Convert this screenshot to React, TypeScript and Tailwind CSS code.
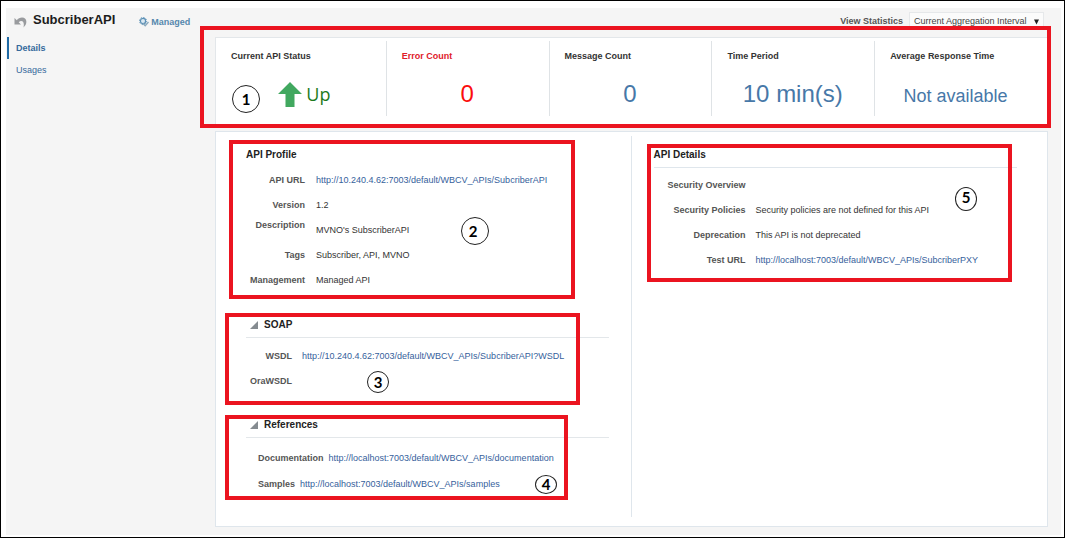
import { useState, type ReactNode } from "react";

const link = "text-[#36619c] hover:underline";

function Outline({ className }: { className: string }) {
  return <div aria-hidden="true" className={`pointer-events-none absolute z-10 border-4 border-[#eb1420] ${className}`} />;
}

function Marker({ n, className }: { n: number; className: string }) {
  return (
    <span
      className={`absolute z-10 flex justify-center rounded-[50%] border border-[#222] font-[Lato,sans-serif] text-[15px] font-bold text-black ${className}`}
    >
      {n}
    </span>
  );
}

function Stat({ title, children, first, danger }: { title: string; children: ReactNode; first?: boolean; danger?: boolean }) {
  return (
    <section className={`relative flex flex-col ${first ? "pl-2" : "border-l border-[#dfe3e6] pl-[15px]"}`}>
      <h2 className={`mt-[7px] h-4 text-[9px] leading-4 font-bold whitespace-nowrap ${danger ? "text-[#e0202a]" : "text-[#333]"}`}>{title}</h2>
      <div className={`mt-[14px] flex h-8 items-center justify-center ${first ? "pr-2" : "pr-4"}`}>{children}</div>
    </section>
  );
}

function Row({ label, children, width, high, tall }: { label: string; children?: ReactNode; width: string; high?: boolean; tall?: boolean }) {
  return (
    <div className={`flex items-center ${tall ? "h-[26px]" : "h-[25px]"}`}>
      <dt className={`shrink-0 text-right font-bold text-[#555] ${width} ${high ? "pb-[10px]" : ""}`}>{label}</dt>
      <dd className="whitespace-nowrap text-[#333]">{children}</dd>
    </div>
  );
}

function Group({ title, children }: { title: string; children: ReactNode }) {
  const [open, setOpen] = useState(true);
  return (
    <section className="relative mt-5">
      <h2 className="border-b border-[#e3e7ea]">
        <button
          type="button"
          aria-expanded={open}
          onClick={() => setOpen(!open)}
          className="flex h-6 items-center gap-[6px] pl-1 text-[10px] font-bold text-[#222]"
        >
          <svg viewBox="0 0 8 8" className={`h-2 w-2 ${open ? "" : "-rotate-45"}`} aria-hidden="true">
            <path d="M8 0V8H0Z" fill="#858b90" />
          </svg>
          {title}
        </button>
      </h2>
      {open && children}
    </section>
  );
}

export default function App() {
  return (
    <div className="flex min-h-screen flex-col border border-black bg-white pt-[7px] pr-[3px] pb-[2px] pl-[5px] font-['Liberation_Sans',Arial,sans-serif] text-[9px] leading-3">
      <div className="flex flex-1 flex-col bg-[#f5f5f5]">
        <header className="flex h-[29px] items-start pr-[17px] pl-2">
          <button type="button" aria-label="Back" className="mt-2 mr-[6px]">
            <svg viewBox="0 0 13 12" className="h-3 w-[13px]" aria-hidden="true">
              <path d="M.5 2V8.500H7L4.700 6.200C7 4 11 4.500 9.500 11.500C14 7.500 13 1.500 8 1.500C6 1.500 4 2.500 2.800 4.200Z" fill="#999b9e" />
            </svg>
          </button>
          <h1 className="text-[13px] leading-6 font-bold text-[#1c1c1c]">SubcriberAPI</h1>
          <p className="mt-[7px] ml-6 flex h-[14px] items-center gap-[2px] font-bold text-[#5688ad]">
            <svg viewBox="0 0 10 10" className="h-[10px] w-[10px]" aria-hidden="true">
              <circle cx="4" cy="4" r="2.6" fill="#dbe9f2" stroke="#5b90b6" strokeWidth="1.2" />
              <circle cx="4" cy="4" r="3.6" fill="none" stroke="#5b90b6" strokeDasharray="1.3 1.5" />
              <path d="M4 6.500L6.200 8.700L9.500 5" fill="none" stroke="#8aa9bd" strokeWidth="1.4" />
            </svg>
            Managed
          </p>
          <div className="mt-1 ml-auto flex h-[18px] items-center">
            <label htmlFor="interval" className="mr-[6px] font-bold text-[#555]">
              View Statistics
            </label>
            <div className="relative">
              <select
                id="interval"
                className="h-[18px] w-[135px] appearance-none border border-[#e6e8ea] bg-[#fbfbfb] pl-1 text-[9px] text-[#444]"
              >
                <option>Current Aggregation Interval</option>
              </select>
              <svg viewBox="0 0 6 6" className="pointer-events-none absolute top-[7px] right-[5px] h-[6px] w-[5px]" aria-hidden="true">
                <path d="M0 0H6L3 6Z" fill="#222" />
              </svg>
            </div>
          </div>
        </header>

        <div className="flex flex-1">
          <nav className="w-[209px] shrink-0 text-[#36699c]">
            <a href="#details" aria-current="page" className="ml-px flex h-[22px] items-center border-l-2 border-[#1f6aa5] pl-[7px] font-bold">
              Details
            </a>
            <a href="#usages" className="flex h-[22px] items-center pl-[10px]">
              Usages
            </a>
          </nav>

          <main className="flex min-w-0 flex-1 flex-col gap-[6px] pr-[13px] pb-2">
            <div className="relative grid h-[88px] grid-cols-5 border border-[#e3e7ea] bg-white pt-[3px] pr-[10px] pb-2 pl-[7px]">
              <Outline className="-top-3 -right-1 -bottom-1 -left-4" />
              <Stat title="Current API Status" first>
                <Marker n={1} className="top-11 left-[9px] h-7 w-7 leading-[27px]" />
                <div className="flex items-center gap-1 font-['Open_Sans',sans-serif] text-[18px] text-[#1c7a1c]">
                  <svg viewBox="0 0 24 25" className="h-[25px] w-6" aria-hidden="true">
                    <path d="M12 0L24 12H16.500V25H7.500V12H0Z" fill="#41a85f" />
                  </svg>
                  Up
                </div>
              </Stat>
              <Stat title="Error Count" danger>
                <span className="text-[24px] text-[#fb0d0d]">0</span>
              </Stat>
              <Stat title="Message Count">
                <span className="text-[24px] text-[#4778a8]">0</span>
              </Stat>
              <Stat title="Time Period">
                <span className="text-[24px] whitespace-nowrap text-[#4778a8]">10 min(s)</span>
              </Stat>
              <Stat title="Average Response Time">
                <span className="pt-1 text-[18px] whitespace-nowrap text-[#4778a8]">Not available</span>
              </Stat>
            </div>

            <div className="grid flex-1 grid-cols-2 border border-[#dfe6ec] bg-white pt-1 pb-[9px]">
              <div className="border-r border-[#dfe6ec] pt-[7px] pr-[22px] pb-5 pl-[30px]">
                <section className="relative pb-px">
                  <Outline className="-top-[3px] -left-[17px] h-[159px] w-[346px]" />
                  <h2 className="h-6 text-[10px] leading-6 font-bold text-[#222]">API Profile</h2>
                  <dl>
                    <Row label="API URL" width="w-[70px] pr-[11px]">
                      <a href="#api-url" className={link}>http://10.240.4.62:7003/default/WBCV_APIs/SubcriberAPI</a>
                    </Row>
                    <Row label="Version" width="w-[70px] pr-[11px]">1.2</Row>
                    <Row label="Description" width="w-[70px] pr-[11px]" high>MVNO's SubscriberAPI</Row>
                    <Row label="Tags" width="w-[70px] pr-[11px]">Subscriber, API, MVNO</Row>
                    <Row label="Management" width="w-[70px] pr-[11px]">Managed API</Row>
                  </dl>
                  <Marker n={2} className="top-[74px] left-[215px] h-7 w-7 pr-1 leading-[26px]" />
                </section>
                <Group title="SOAP">
                  <Outline className="top-0 -left-[21px] h-[92px] w-[355px]" />
                  <dl className="pt-[5px]">
                    <Row label="WSDL" width="w-14 pr-[10px]">
                      <a href="#wsdl" className={link}>http://10.240.4.62:7003/default/WBCV_APIs/SubcriberAPI?WSDL</a>
                    </Row>
                    <Row label="OraWSDL" width="w-14 pr-[10px]" />
                  </dl>
                  <Marker n={3} className="top-[58px] left-[121px] size-[22px] leading-[21px]" />
                </Group>
                <Group title="References">
                  <Outline className="top-[2px] -left-[21px] h-[85px] w-[343px]" />
                  <dl className="pt-[7px] pl-3">
                    <Row label="Documentation" width="pr-[5px]" tall>
                      <a href="#documentation" className={link}>http://localhost:7003/default/WBCV_APIs/documentation</a>
                    </Row>
                    <Row label="Samples" width="pr-[5px]" tall>
                      <a href="#samples" className={link}>http://localhost:7003/default/WBCV_APIs/samples</a>
                    </Row>
                  </dl>
                  <Marker n={4} className="top-[62px] left-[289px] h-[19px] w-[22px] leading-[17px]" />
                </Group>
              </div>

              <div className="pt-[7px] pr-[30px] pl-[22px]">
                <section className="relative">
                  <Outline className="top-[1px] right-[5px] -left-[7px] h-[138px]" />
                  <h2 className="h-[25px] border-b border-[#dfe6ec] text-[10px] leading-6 font-bold text-[#222]">API Details</h2>
                  <dl className="pt-1">
                    <Row label="Security Overview" width="w-[102px] pr-[10px]" />
                    <Row label="Security Policies" width="w-[102px] pr-[10px]">Security policies are not defined for this API</Row>
                    <Row label="Deprecation" width="w-[102px] pr-[10px]">This API is not deprecated</Row>
                    <Row label="Test URL" width="w-[102px] pr-[10px]">
                      <a href="#test-url" className={link}>http://localhost:7003/default/WBCV_APIs/SubcriberPXY</a>
                    </Row>
                  </dl>
                  <Marker n={5} className="top-11 right-10 h-6 w-[22px] leading-[18px]" />
                </section>
              </div>
            </div>
          </main>
        </div>
      </div>
    </div>
  );
}
